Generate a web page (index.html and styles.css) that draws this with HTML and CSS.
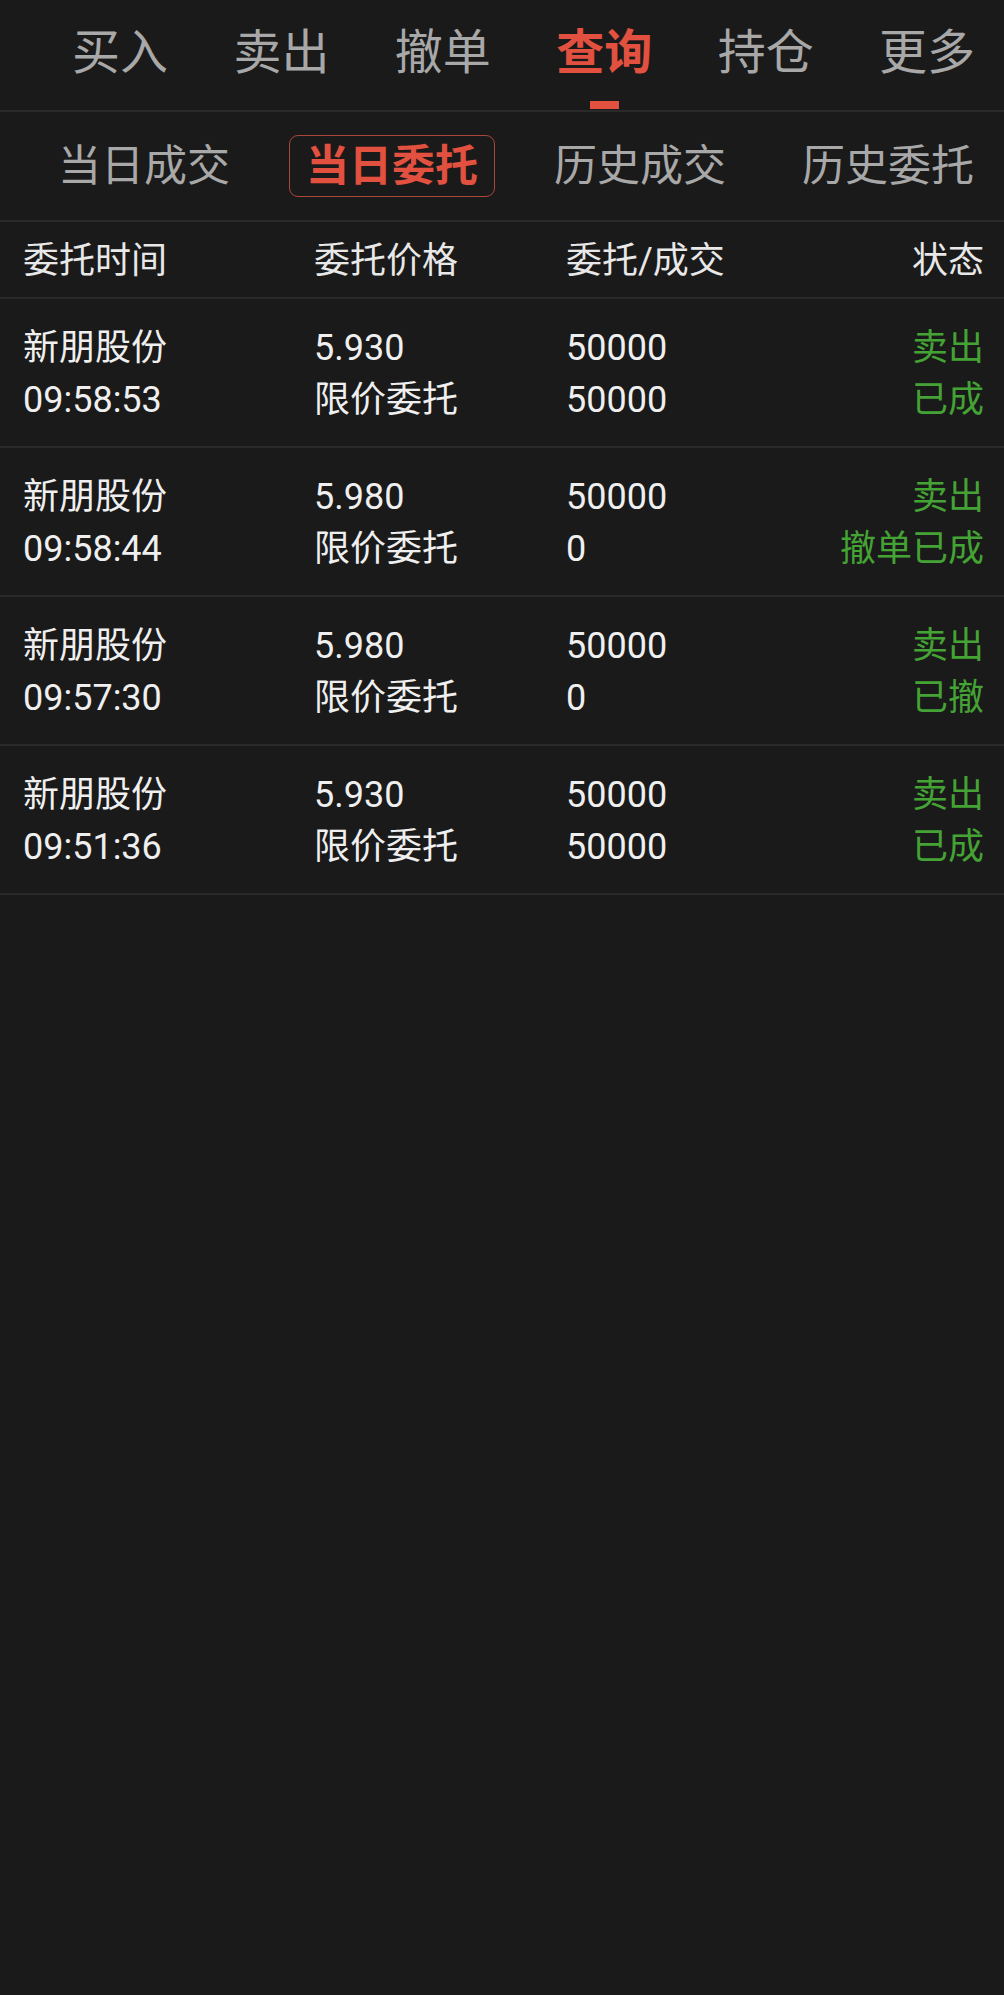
FILE: index.html
```html
<!DOCTYPE html>
<html lang="zh-CN">
<head>
<meta charset="utf-8">
<title>当日委托</title>
<link rel="stylesheet" href="styles.css">
</head>
<body>
<div class="page">
  <nav class="main-tabs">
    <div class="main-tab"><span class="main-label">买入</span><span class="indicator"></span></div>
    <div class="main-tab"><span class="main-label">卖出</span><span class="indicator"></span></div>
    <div class="main-tab"><span class="main-label">撤单</span><span class="indicator"></span></div>
    <div class="main-tab active"><span class="main-label">查询</span><span class="indicator"></span></div>
    <div class="main-tab"><span class="main-label">持仓</span><span class="indicator"></span></div>
    <div class="main-tab"><span class="main-label">更多</span><span class="indicator"></span></div>
  </nav>
  <nav class="sub-tabs">
    <div class="sub-tab">当日成交</div>
    <div class="sub-tab active">当日委托</div>
    <div class="sub-tab">历史成交</div>
    <div class="sub-tab">历史委托</div>
  </nav>
  <div class="table">
    <div class="row head">
      <div class="cell">委托时间</div>
      <div class="cell">委托价格</div>
      <div class="cell">委托/成交</div>
      <div class="cell status-h">状态</div>
    </div>
    <div class="row">
      <div class="cell"><div>新朋股份</div><div>09:58:53</div></div>
      <div class="cell"><div>5.930</div><div>限价委托</div></div>
      <div class="cell"><div>50000</div><div>50000</div></div>
      <div class="cell status"><div>卖出</div><div>已成</div></div>
    </div>
    <div class="row">
      <div class="cell"><div>新朋股份</div><div>09:58:44</div></div>
      <div class="cell"><div>5.980</div><div>限价委托</div></div>
      <div class="cell"><div>50000</div><div>0</div></div>
      <div class="cell status"><div>卖出</div><div>撤单已成</div></div>
    </div>
    <div class="row">
      <div class="cell"><div>新朋股份</div><div>09:57:30</div></div>
      <div class="cell"><div>5.980</div><div>限价委托</div></div>
      <div class="cell"><div>50000</div><div>0</div></div>
      <div class="cell status"><div>卖出</div><div>已撤</div></div>
    </div>
    <div class="row">
      <div class="cell"><div>新朋股份</div><div>09:51:36</div></div>
      <div class="cell"><div>5.930</div><div>限价委托</div></div>
      <div class="cell"><div>50000</div><div>50000</div></div>
      <div class="cell status"><div>卖出</div><div>已成</div></div>
    </div>
  </div>
</div>
</body>
</html>
```
FILE: styles.css
```css
html, body {
  margin: 0;
  padding: 0;
  background: #1a1a1a;
}
body {
  font-family: Roboto, "Noto Sans CJK SC", sans-serif;
  color: #ededed;
}
.page {
  width: 1004px;
  min-height: 1995px;
  background: #1a1a1a;
  overflow: hidden;
}

/* main tabs */
.main-tabs {
  display: flex;
  gap: 65.4px;
  padding: 29px 0 0 72px;
  border-bottom: 2px solid #2a2a2a;
  height: 81px;
}
.main-tab {
  display: flex;
  flex-direction: column;
  align-items: center;
  flex: 0 0 auto;
}
.main-label {
  font-size: 48px;
  line-height: 48px;
  height: 48px;
  color: #a8a8a8;
  white-space: nowrap;
}
.indicator {
  width: 29px;
  height: 8px;
  margin-top: 24px;
  background: transparent;
}
.main-tab.active .main-label {
  color: #e2513f;
  font-weight: 700;
}
.main-tab.active .indicator {
  background: #e2513f;
}

/* sub tabs */
.sub-tabs {
  display: flex;
  align-items: center;
  gap: 42px;
  padding-left: 41px;
  height: 108px;
  border-bottom: 2px solid #2a2a2a;
}
.sub-tab {
  flex: 0 0 auto;
  height: 60px;
  line-height: 60px;
  padding: 0 16px;
  border: 1px solid transparent;
  border-radius: 9px;
  font-size: 43px;
  color: #a8a8a8;
  white-space: nowrap;
}
.sub-tab.active {
  color: #e2513f;
  font-weight: 700;
  border-color: #a8473a;
}

/* table */
.row {
  display: grid;
  grid-template-columns: 291px 252px 1fr auto;
  align-items: center;
  padding: 3px 20px 0 23px;
  height: 144px;
  border-bottom: 2px solid #2a2a2a;
  font-size: 36px;
  line-height: 52px;
  color: #efefef;
}
.row.head {
  height: 73px;
  padding-top: 2px;
  color: #e8e8e8;
}
.cell {
  white-space: nowrap;
}
.status-h {
  text-align: right;
}
.status {
  text-align: right;
  color: #44a334;
}
```
